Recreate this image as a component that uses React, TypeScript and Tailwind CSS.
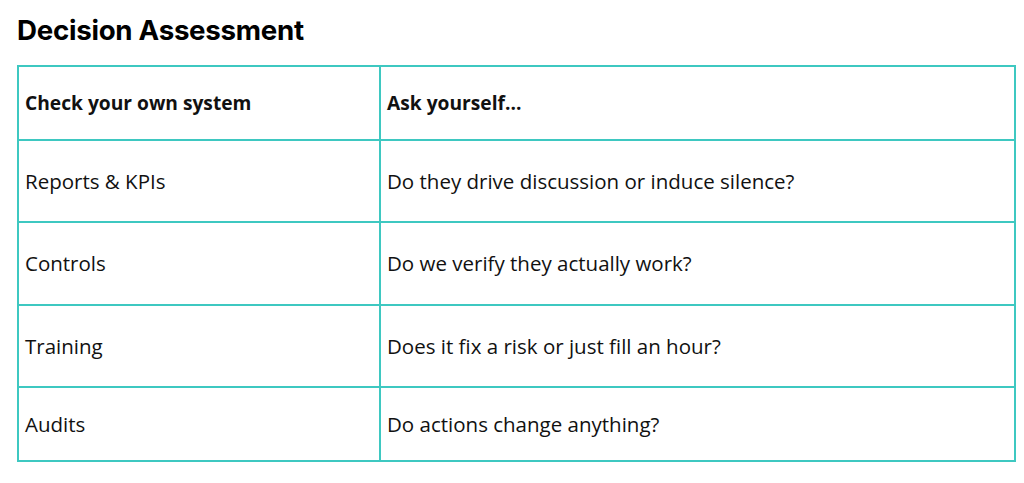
const rows = [
  { label: 'Reports & KPIs', question: 'Do they drive discussion or induce silence?', h: 'h-[82px]' },
  { label: 'Controls', question: 'Do we verify they actually work?', h: 'h-[83px]' },
  { label: 'Training', question: 'Does it fix a risk or just fill an hour?', h: 'h-[82px]' },
  { label: 'Audits', question: 'Do actions change anything?', h: 'h-[74px]' },
];

const cell = 'border-2 border-[#3ec8c1] px-[6px] align-middle';

export default function App() {
  return (
    <div className="min-h-[483px] w-[1024px] bg-white px-[17px] pt-[13px] text-[#111]">
      <h1 className="font-['Inter',sans-serif] text-[27.7px] font-bold leading-[34px] tracking-[-0.01em] text-black">
        Decision Assessment
      </h1>
      <table className="mt-[18px] w-[999px] border-collapse font-['Open_Sans',sans-serif] text-[20.5px]">
        <thead>
          <tr className="h-[74px] text-[19.2px]">
            <th className={`${cell} w-[362px] text-left font-bold`}>Check your own system</th>
            <th className={`${cell} text-left font-bold`}>Ask yourself...</th>
          </tr>
        </thead>
        <tbody>
          {rows.map((row) => (
            <tr key={row.label} className={row.h}>
              <td className={cell}>{row.label}</td>
              <td className={cell}>{row.question}</td>
            </tr>
          ))}
        </tbody>
      </table>
    </div>
  );
}
